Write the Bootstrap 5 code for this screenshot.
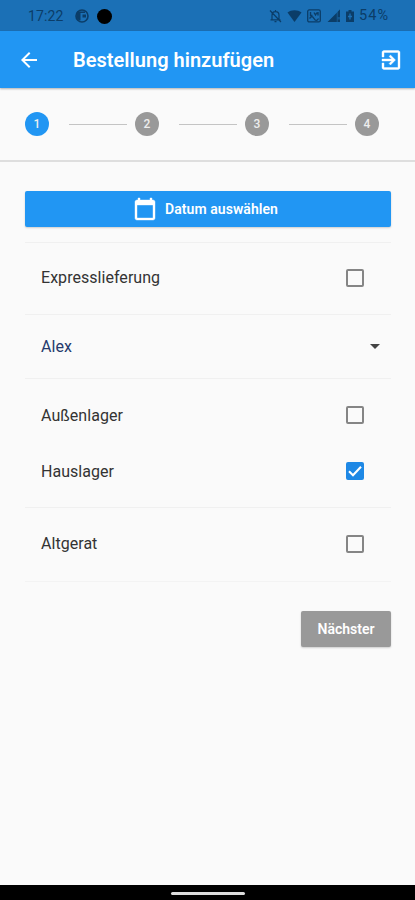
<!DOCTYPE html>
<html lang="de">
<head>
<meta charset="utf-8">
<meta name="viewport" content="width=device-width, initial-scale=1">
<title>Bestellung hinzufügen</title>
<link href="https://cdn.jsdelivr.net/npm/bootstrap@5.3.0/dist/css/bootstrap.min.css" rel="stylesheet">
<style>
body{font-family:Roboto,"Liberation Sans",sans-serif;background:#fafafa;color:#333;height:900px;overflow:hidden}
svg{display:block;flex:none}
.statusbar{height:31px;background:#1b70b6;color:#0b3d68;font-size:14px;padding:1px 26px 0 28px}
.statusbar .clock{letter-spacing:.1px;width:47px}
.percent{font-size:14.500px;letter-spacing:1px;margin-left:4px}
.signal{margin-left:6px;margin-right:4px}
.appbar{height:57px;background:#2196f3;color:#fff;padding:0 12px 0 17px;box-shadow:0 1px 2px rgba(0,0,0,.3);z-index:1}
.appbar h1{font-size:20px;font-weight:600;letter-spacing:.02px;margin:1px 0 0 32px}
.stepper{height:74px;border-bottom:2px solid #dedede;padding:0 36px 0 25px}
.step-dot{width:24px;height:24px;background:#999;color:#eee;font-size:12px;font-weight:500;flex:none}
.step-dot.current{background:#2196f3}
.step-line{height:1px;background:#c4c4c4;margin:0 8px 0 20px}
.date-btn,.next-btn{height:36px;border:0;border-radius:2px;color:#fff;font-size:14px;font-weight:600;box-shadow:0 1px 2px rgba(0,0,0,.18)}
.date-btn{background:#2196f3;padding:0 5px 0 0;letter-spacing:.06px}
.next-btn{width:90px;background:#999}
.page{padding:29px 24px 0 25px}
.group{border-top:1px solid #f0f0f0;padding:0 27px 0 16px;font-size:16px;letter-spacing:.04px}
.groups{margin-top:15px;border-bottom:1px solid #f3f3f3}
.h-72{height:72px;padding-bottom:1px}.h-64{height:64px}.h-74{height:74px;padding-bottom:1px}.h-129{height:129px;padding-top:1px}
.line-56{height:56px}
.person{color:#263a6c;padding-right:11px}
.group .form-check-input{width:18px;height:18px;border:2px solid #858585;border-radius:2px;margin:-1px 0 0;background-color:transparent;box-shadow:none}
.group .form-check-input:checked{background-color:#1e88e5;border-color:#1e88e5;background-size:18px;background-position:center;background-image:url("data:image/svg+xml,%3Csvg xmlns='http://www.w3.org/2000/svg' viewBox='0 0 18 18'%3E%3Cpath d='M3 9.2l4 4 8-8.4' fill='none' stroke='white' stroke-width='2.1'/%3E%3C/svg%3E")}
.next-row{margin-top:29px}
.navbar-area{height:15px;background:#000;padding-top:1px}
.home-pill{width:74px;height:3px;background:#ddd;border-radius:2px}
</style>
<script src="https://cdn.jsdelivr.net/npm/bootstrap@5.3.0/dist/js/bootstrap.bundle.min.js"></script>
</head>
<body class="d-flex flex-column">
<div class="statusbar d-flex align-items-center">
  <span class="clock">17:22</span>
  <svg width="14" height="14" viewBox="0 0 14 14"><circle cx="7" cy="7" r="6" fill="none" stroke="currentColor" stroke-width="1.600"/><path d="M2 2.500h3.500v9H4L1.500 9zM5.500 2.500H10V4H5.500zM7.500 5.500h3.500V8.500H7.500z" fill="currentColor"/></svg>
  <svg class="ms-2" width="15" height="15" viewBox="0 0 15 15"><circle cx="7.500" cy="7.500" r="7.500" fill="#000"/></svg>
  <div class="d-flex align-items-center ms-auto">
    <svg width="13" height="14" viewBox="0 0 13 14" fill="none" stroke="currentColor" stroke-width="1.200"><path d="M3 10.500V6.200C3 4 4.500 2.700 6.500 2.700S10 4 10 6.200v4.300M1.500 10.800h10M6.500 1v1.500M5.500 12.700h2M1 1.500l11 11.500"/></svg>
    <svg class="ms-1" width="17" height="14" viewBox="0 0 17 14" fill="currentColor"><path d="M1.500 3.500C5.500.4 11.500.4 15.500 3.500L8.500 13z"/></svg>
    <svg class="ms-1" width="14" height="14" viewBox="0 0 14 14" fill="none" stroke="currentColor"><rect x=".7" y=".9" width="12.600" height="12" rx="1.500" stroke-width="1.300"/><path d="M3.500 3v3.500h2M7 3.500l1.500 2.500L10 3.500M11 3v3.500M2.500 9.500c2-2.500 3-2.500 4.500 0s3 2.500 4.500 0" stroke-width="1.400"/></svg>
    <svg class="signal" width="14" height="14" viewBox="0 0 14 14" fill="currentColor"><path d="M.5 13L9.800 3.700V13zM10.800 2.700L13 .5V8h-2.200zM10.800 10.500H13V13h-2.200z"/><path d="M9.800 3.700L13 .5V13H9.800z" opacity=".5"/></svg>
    <svg width="10" height="14" viewBox="0 0 10 14"><path d="M3.500 1h3v1.500H9V13H1V2.500h2.500z" fill="currentColor"/><path d="M5 4.500v6M3 7.500h4" stroke="#1b70b6" stroke-width="1.300"/></svg>
    <span class="percent">54%</span>
  </div>
</div>
<header class="appbar d-flex align-items-center">
  <svg width="24" height="24" viewBox="0 0 24 24" fill="currentColor"><path d="M20 11H7.830l5.590-5.590L12 4l-8 8 8 8 1.410-1.410L7.830 13H20v-2z"/></svg>
  <h1>Bestellung hinzufügen</h1>
  <svg class="ms-auto" width="24" height="24" viewBox="0 0 24 24" fill="currentColor"><path d="M10.090 15.590L11.500 17l5-5-5-5-1.410 1.410L12.670 11H3v2h9.670l-2.580 2.590zM19 2.500H5c-1.110 0-2 .9-2 2V9h2V4.500h14v15H5V15H3v4.500c0 1.100.89 2 2 2h14c1.100 0 2-.9 2-2v-15c0-1.100-.9-2-2-2z" stroke="currentColor" stroke-width=".4"/></svg>
</header>
<div class="stepper d-flex align-items-center">
  <span class="step-dot current rounded-circle d-flex align-items-center justify-content-center">1</span>
  <span class="step-line flex-fill"></span>
  <span class="step-dot rounded-circle d-flex align-items-center justify-content-center">2</span>
  <span class="step-line flex-fill"></span>
  <span class="step-dot rounded-circle d-flex align-items-center justify-content-center">3</span>
  <span class="step-line flex-fill"></span>
  <span class="step-dot rounded-circle d-flex align-items-center justify-content-center">4</span>
</div>
<main class="page flex-fill">
  <button class="date-btn btn w-100 d-flex align-items-center justify-content-center gap-2" type="button">
    <svg width="24" height="24" viewBox="0 0 24 24" fill="currentColor"><path d="M20 3h-1V1h-2v2H7V1H5v2H4c-1.100 0-2 .9-2 2v16c0 1.100.9 2 2 2h16c1.100 0 2-.9 2-2V5c0-1.100-.9-2-2-2zm0 18H4V8h16v13z" stroke="currentColor" stroke-width=".4"/></svg>
    <span>Datum auswählen</span>
  </button>
  <div class="groups">
    <label class="group h-72 d-flex align-items-center justify-content-between"><span>Expresslieferung</span><input class="form-check-input" type="checkbox"></label>
    <div class="group person h-64 d-flex align-items-center justify-content-between"><span>Alex</span>
      <svg width="10" height="5" viewBox="0 0 10 5"><path d="M0 0h10L5 5z" fill="#444"/></svg></div>
    <div class="group h-129 d-flex flex-column justify-content-center">
      <label class="line-56 d-flex align-items-center justify-content-between"><span>Außenlager</span><input class="form-check-input" type="checkbox"></label>
      <label class="line-56 d-flex align-items-center justify-content-between"><span>Hauslager</span><input class="form-check-input" type="checkbox" checked></label>
    </div>
    <label class="group h-74 d-flex align-items-center justify-content-between"><span>Altgerat</span><input class="form-check-input" type="checkbox"></label>
  </div>
  <div class="next-row d-flex justify-content-end"><button class="next-btn btn p-0" type="button">Nächster</button></div>
</main>
<footer class="navbar-area d-flex align-items-center justify-content-center"><span class="home-pill"></span></footer>
</body>
</html>
